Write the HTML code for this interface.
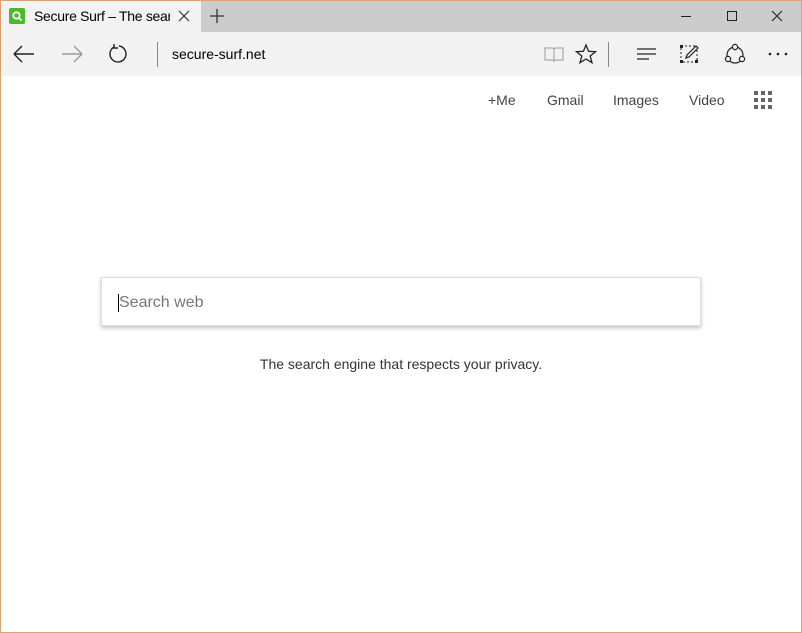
<!DOCTYPE html>
<html><head><style>
*{margin:0;padding:0;box-sizing:border-box}
body{width:802px;height:633px;overflow:hidden;background:#fff;font-family:"Liberation Sans",sans-serif;position:relative}
.frame{position:absolute;inset:0;border:1px solid #d9a273;pointer-events:none;z-index:9}
.tabbar{position:absolute;left:0;top:0;width:802px;height:32px;background:#cccccc}
.tab{position:absolute;left:1px;top:1px;width:200px;height:31px;background:#f2f2f2}
.tb{position:absolute;left:0;top:32px;width:802px;height:44px;background:#f2f2f2}
.a{position:absolute}
.t{font-size:14px;color:#000}
.nav{font-size:14px;color:#444;top:92px}
</style></head><body>
<div class="frame"></div>
<div class="tabbar"></div>
<div class="tab"></div>
<div class="a" style="left:9px;top:8px;width:16px;height:16px;background:#4cb82b;border-radius:2px"></div>
<svg class="a" style="left:9px;top:8px" width="16" height="16"><circle cx="7.5" cy="7.5" r="3.2" fill="none" stroke="#fff" stroke-width="1.8"/><line x1="10" y1="10" x2="12.5" y2="12.5" stroke="#fff" stroke-width="1.8"/></svg>
<div class="a t" style="left:34px;top:8px;width:136px;overflow:hidden;white-space:nowrap;letter-spacing:-0.3px">Secure Surf – The search engine</div>
<svg class="a" style="left:178px;top:10px" width="12" height="12"><path d="M1 1L11 11M11 1L1 11" stroke="#333" stroke-width="1.2"/></svg>
<svg class="a" style="left:209px;top:8px" width="16" height="16"><path d="M8 1V15M1 8H15" stroke="#333" stroke-width="1.3"/></svg>
<svg class="a" style="left:680px;top:10px" width="110" height="14"><path d="M1 6.5H11" stroke="#222"/><rect x="47.5" y="1.5" width="9" height="9" fill="none" stroke="#222"/><path d="M92 1L102 11M102 1L92 11" stroke="#222" stroke-width="1.1"/></svg>
<div class="tb"></div>
<svg class="a" style="left:12px;top:44px" width="24" height="20"><path d="M2 10H22M2 10L10 2M2 10L10 18" fill="none" stroke="#222" stroke-width="1.4"/></svg>
<svg class="a" style="left:60px;top:44px" width="24" height="20"><path d="M2 10H22M22 10L14 2M22 10L14 18" fill="none" stroke="#999" stroke-width="1.4"/></svg>
<svg class="a" style="left:108px;top:43px" width="22" height="22"><path d="M6 4A8 8 0 1 0 11 3" fill="none" stroke="#222" stroke-width="1.4"/><path d="M6 1V5H10" fill="none" stroke="#222" stroke-width="1.4"/></svg>
<div class="a" style="left:157px;top:42px;width:1px;height:25px;background:#888"></div>
<div class="a t" style="left:172px;top:46px;font-size:14px;color:#000">secure-surf.net</div>
<svg class="a" style="left:543px;top:45px" width="22" height="20"><path d="M2 3H9Q11 3 11 5V17Q11 15 9 15H2ZM20 3H13Q11 3 11 5V17Q11 15 13 15H20Z" fill="none" stroke="#aaa" stroke-width="1.2"/></svg>
<svg class="a" style="left:575px;top:43px" width="22" height="22"><path d="M11 2L13.6 8.3 20.5 8.7 15.2 13 17 19.7 11 16 5 19.7 6.8 13 1.5 8.7 8.4 8.3Z" fill="none" stroke="#222" stroke-width="1.3"/></svg>
<div class="a" style="left:608px;top:42px;width:1px;height:25px;background:#888"></div>
<svg class="a" style="left:636px;top:46px" width="22" height="16"><path d="M1 3H20M1 8H20M1 13H13" stroke="#222" stroke-width="1.3"/></svg>
<svg class="a" style="left:679px;top:43px" width="22" height="22"><rect x="2" y="3" width="16" height="16" fill="none" stroke="#222" stroke-dasharray="2 2"/><rect x="1" y="2" width="3" height="3" fill="#222"/><rect x="1" y="17" width="3" height="3" fill="#222"/><rect x="16" y="17" width="3" height="3" fill="#222"/><path d="M7 15L8 12 17 3 19 5 10 14Z" fill="#f2f2f2" stroke="#222" stroke-width="1.2"/></svg>
<svg class="a" style="left:723px;top:42px" width="24" height="24"><circle cx="12" cy="13" r="8" fill="none" stroke="#222" stroke-width="1.2"/><circle cx="12" cy="5" r="2.6" fill="#f2f2f2" stroke="#222" stroke-width="1.2"/><circle cx="5" cy="17" r="2.6" fill="#f2f2f2" stroke="#222" stroke-width="1.2"/><circle cx="19" cy="17" r="2.6" fill="#f2f2f2" stroke="#222" stroke-width="1.2"/></svg>
<svg class="a" style="left:768px;top:52px" width="22" height="4"><circle cx="2" cy="2" r="1.3" fill="#222"/><circle cx="10" cy="2" r="1.3" fill="#222"/><circle cx="18" cy="2" r="1.3" fill="#222"/></svg>
<div class="a nav" style="left:488px">+Me</div>
<div class="a nav" style="left:547px">Gmail</div>
<div class="a nav" style="left:613px">Images</div>
<div class="a nav" style="left:689px">Video</div>
<svg class="a" style="left:754px;top:91px" width="18" height="18" fill="#666"><rect x="0" y="0" width="4" height="4"/><rect x="7" y="0" width="4" height="4"/><rect x="14" y="0" width="4" height="4"/><rect x="0" y="7" width="4" height="4"/><rect x="7" y="7" width="4" height="4"/><rect x="14" y="7" width="4" height="4"/><rect x="0" y="14" width="4" height="4"/><rect x="7" y="14" width="4" height="4"/><rect x="14" y="14" width="4" height="4"/></svg>
<div class="a" style="left:101px;top:277px;width:600px;height:49px;background:#fff;border:1px solid #ddd;box-shadow:0 2px 4px rgba(0,0,0,.25)"></div>
<div class="a" style="left:118px;top:294px;width:1px;height:18px;background:#000"></div>
<div class="a" style="left:119px;top:294px;font-size:16px;color:#777">Search web</div>
<div class="a" style="left:0;width:802px;top:356px;text-align:center;font-size:14px;color:#333">The search engine that respects your privacy.</div>
</body></html>
